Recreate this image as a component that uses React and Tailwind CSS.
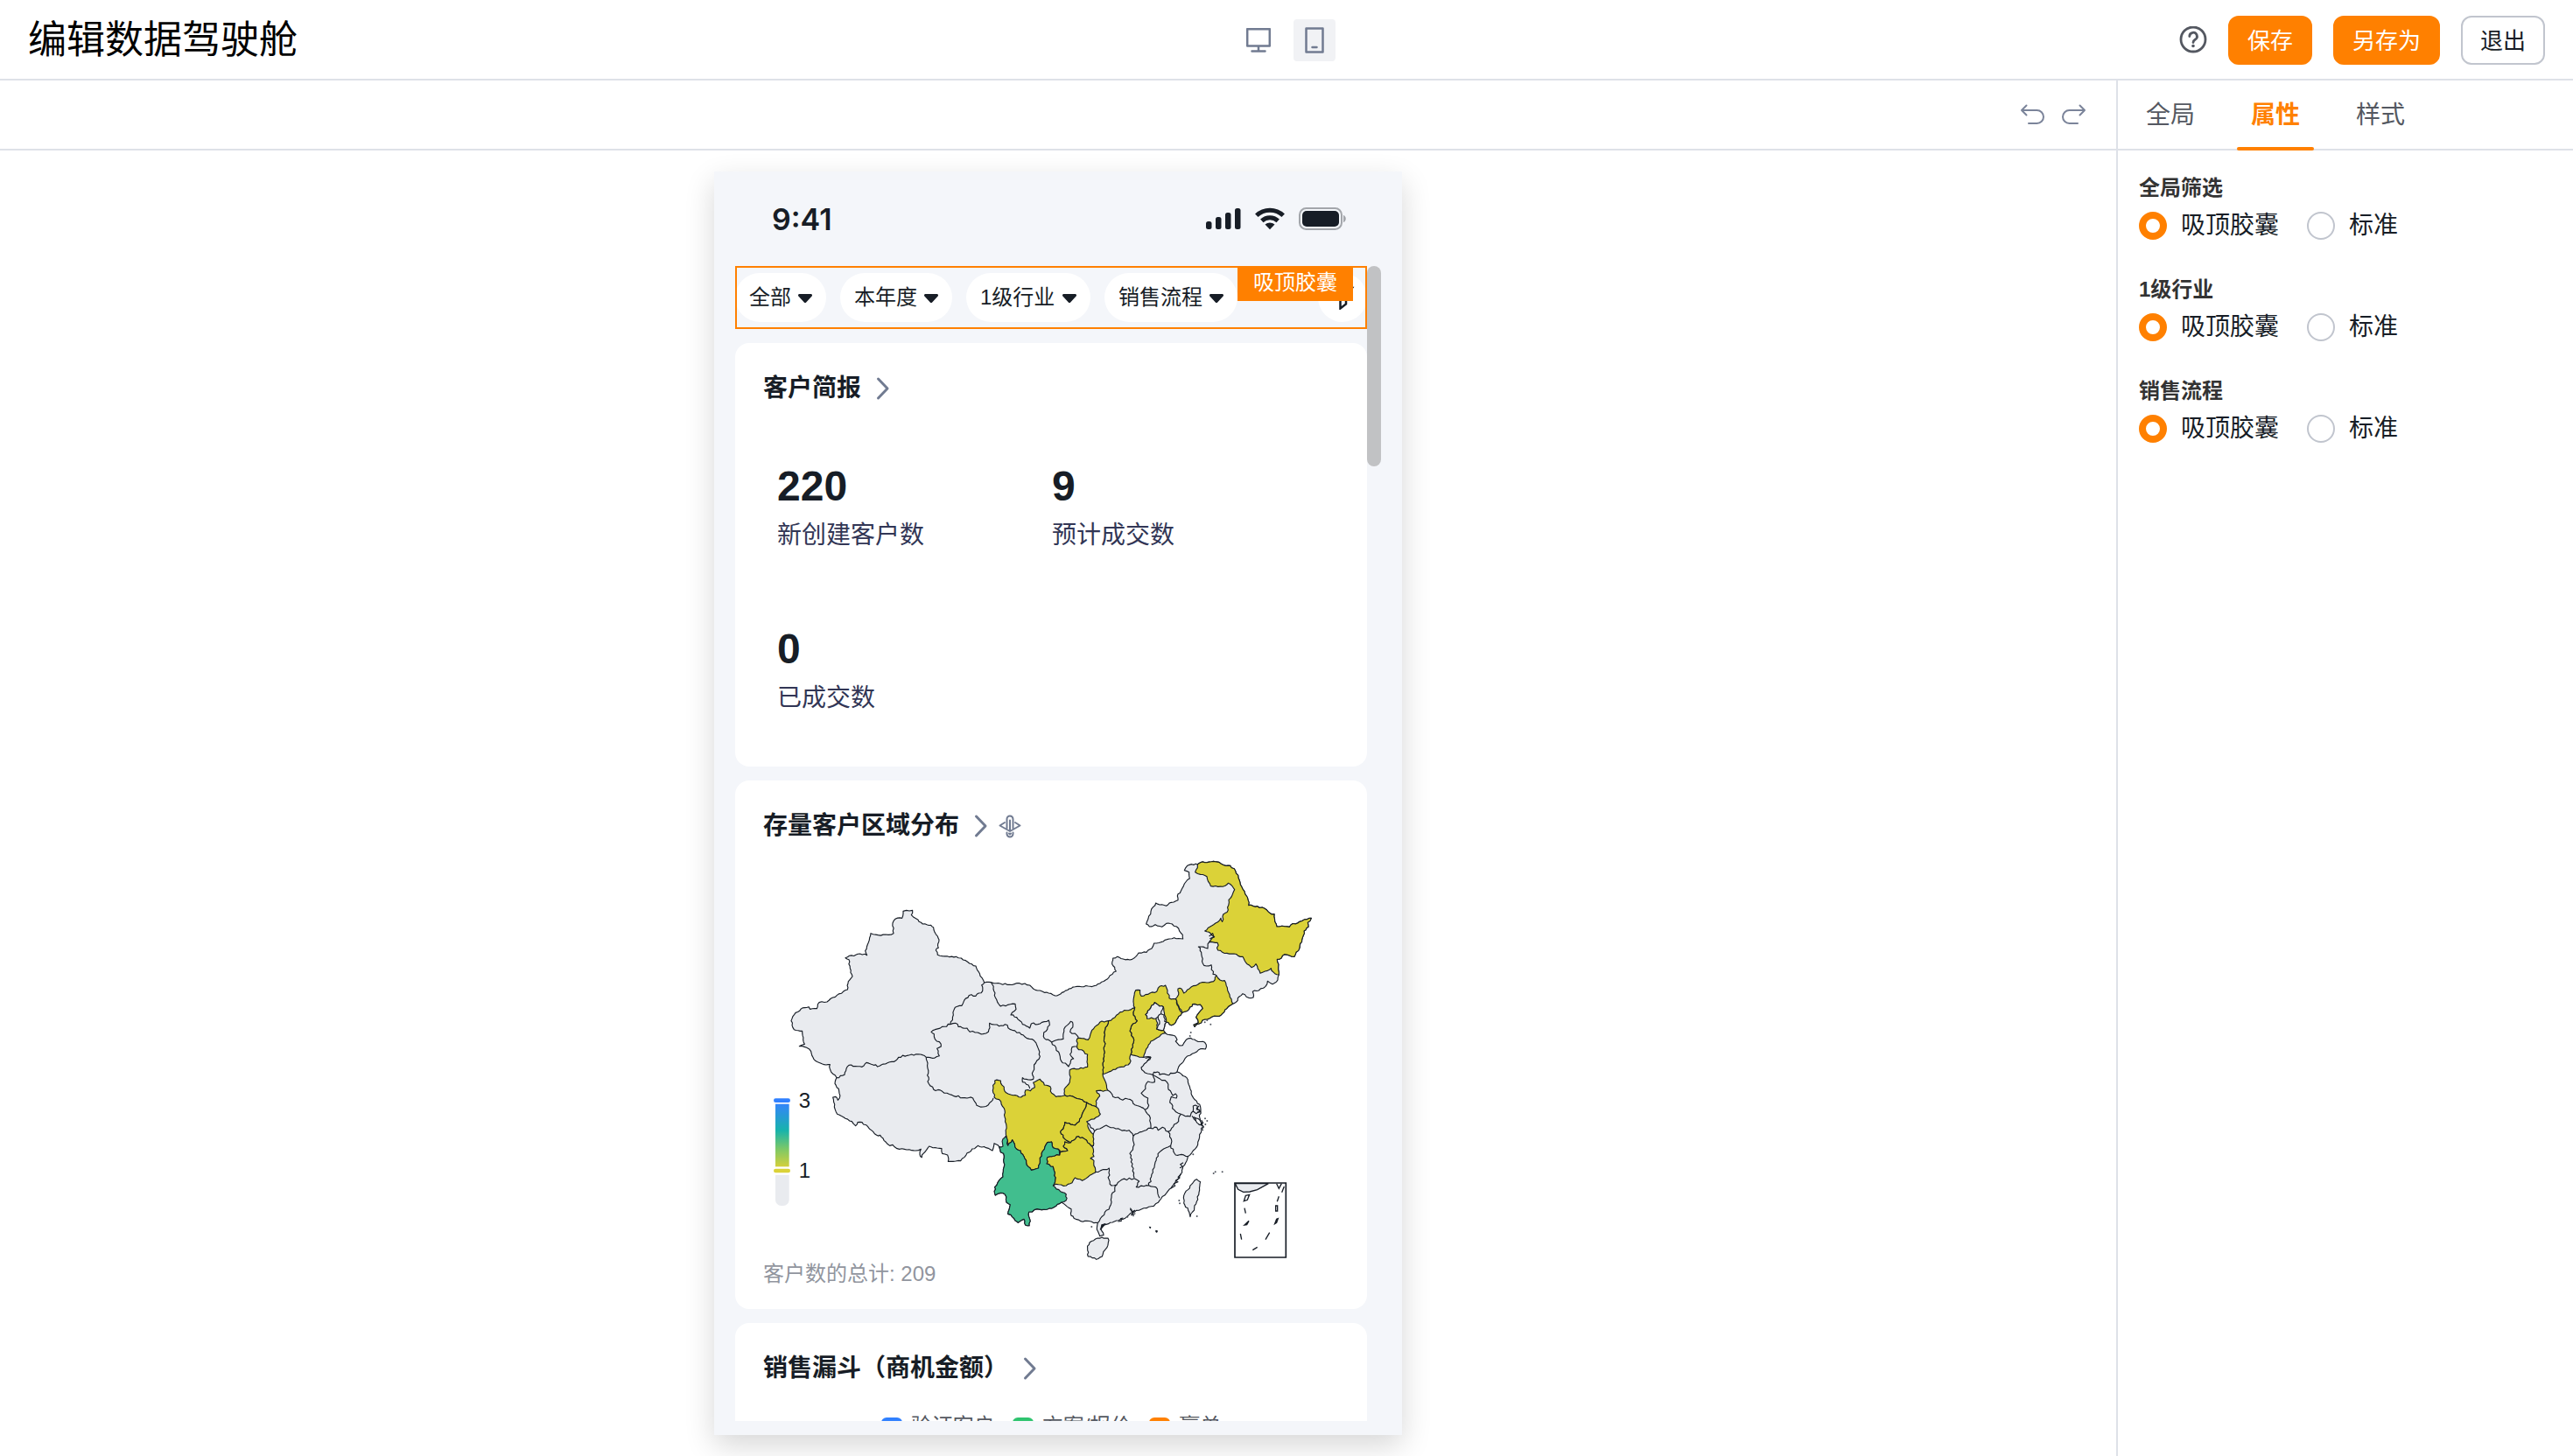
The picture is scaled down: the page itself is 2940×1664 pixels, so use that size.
import React, { useState } from 'react';

const FONT = "font-['Liberation_Sans','Noto_Sans_CJK_SC',sans-serif]";

const FILTERS = ['全部', '本年度', '1级行业', '销售流程'];

const METRICS = [
  { value: 220, label: '新创建客户数' },
  { value: 9, label: '预计成交数' },
  { value: 0, label: '已成交数' },
];

const FUNNEL_LEGEND = [
  { label: '验证客户', color: 'bg-[#3080ff]' },
  { label: '方案/报价', color: 'bg-[#2fc46f]' },
  { label: '赢单', color: 'bg-[#ff8000]' },
];

const TABS = ['全局', '属性', '样式'];
const FIELDS = ['全局筛选', '1级行业', '销售流程'];
const DISPLAY_MODES = ['吸顶胶囊', '标准'];

/* ---------- map geometry ---------- */

const pts = (str, dx = 0, dy = 0) =>
  str.trim().split(/\s+/).map((p) => {
    const [x, y] = p.split(',').map(Number);
    return [x + dx, y + dy];
  });
const east = (str) => pts(str, 1110, 0);
const south = (str) => pts(str, 600, 420);

// Splits every segment into short steps with a small repeatable wobble
const toPath = (points, closed, amount = 4) => {
  const list = closed ? [...points, points[0]] : points;
  let d = `M${list[0][0]} ${list[0][1]}`;
  for (let i = 1; i < list.length; i++) {
    let [ax, ay] = list[i - 1];
    let [bx, by] = list[i];
    const flip = ax > bx || (ax === bx && ay > by);
    const len = Math.hypot(bx - ax, by - ay);
    const steps = Math.max(1, Math.round(len / 8));
    for (let s = 1; s < steps; s++) {
      const k = flip ? steps - s : s;
      const seed = Math.sin((ax + bx) * 12.9898 + (ay + by) * 78.233 + k * 37.719) * 43758.5453;
      const off = (seed - Math.floor(seed) - 0.5) * amount * (flip ? -1 : 1);
      const x = ax + ((bx - ax) * s) / steps - ((by - ay) / len) * off;
      const y = ay + ((by - ay) * s) / steps + ((bx - ax) / len) * off;
      d += `L${x.toFixed(1)} ${y.toFixed(1)}`;
    }
    d += `L${bx} ${by}`;
  }
  return closed ? `${d}Z` : d;
};

const COAST = [
  ...pts(`516,244 527,241 537,243 548,241 544,257 552,265 561,270 570,280 583,288 597,290 611,292 620,300
    624,316 634,330 639,342 635,356 637,370 628,378 634,394 650,398 675,401 697,400 715,405 730,413 743,423
    757,431 765,432 770,446 780,466 794,489 818,488 850,493 880,496 915,491 950,498 962,510 985,516 1000,523
    1022,526 1043,534 1060,523 1085,510 1112,502 1150,501`),
  ...east(`60,500 80,492 100,480 115,464 136,450 122,425 125,405 140,400 160,408 183,411 203,400 213,387 240,385
    258,372 266,354 290,350 310,341 335,335 365,339 364,325 350,303 328,288 308,286 293,298 270,290 250,297
    239,288 246,270 255,245 272,216 285,222 308,226 325,214 348,206 346,192 358,175 370,150 388,132 386,110
    370,104 380,88 395,83 415,84 425,77 470,73 488,76 505,86 527,88 545,106 555,130 566,160 578,185 588,205
    590,224 620,227 645,235 662,250 678,254 680,280 687,297 730,298 735,291 765,280 790,272 805,268 793,283
    795,298 780,312 775,335 765,370 753,385 747,400 730,396 713,392 703,404 688,409 692,435 694,462 690,480
    672,494 655,484 648,502 625,516 604,520 606,540 590,541 570,527 558,537 548,555 536,562 515,578 490,604
    465,606 440,615 420,630 405,640 402,634 418,626 410,608 420,592 433,578 424,564 398,563 386,580 362,592
    350,605 340,625 325,635 308,624 302,640 298,652 305,662 320,668 338,672 345,685 340,690 352,704 364,704
    376,685 392,679 410,688 440,694 445,702 442,717 425,716 405,730 390,738 373,748 362,765 350,778 345,795
    360,803 378,815 388,845 397,878 412,895 425,915 426,930 422,950 434,985 422,1010 416,1045 400,1065 382,1085
    378,1100 365,1120 362,1140 352,1160 338,1175 318,1198 290,1230 280,1243 265,1255 240,1262 205,1270 185,1280
    160,1300 130,1308 95,1320 84,1335 93,1355 80,1358 70,1335 73,1313`),
  ...south(`570,893 545,886 525,887 508,880 492,868 492,845 470,830 458,822 440,835 425,843 410,846 390,848
    375,845 358,855 347,855 350,880 348,902 335,900 330,880 310,892 300,885 285,865 275,862 283,830 270,822
    265,795 250,790 232,798 230,770 240,755 258,735 262,700 260,655 250,650 245,632`),
  ...pts(`828,1040 822,1065 800,1055 772,1048 735,1073 713,1100 670,1102 668,1080 650,1075 648,1058 625,1055
    605,1050 585,1075 580,1088 573,1078 577,1060 560,1065 545,1064 520,1060 495,1058 480,1045 470,1048
    450,1030 437,1012 425,1012 400,990 375,968 360,968 353,980 340,965 318,955 290,940 280,915 275,882
    285,880 292,892 298,885 296,860 282,835 288,815 275,802 265,785 265,770 245,770 210,752 200,725 185,712
    160,707 178,700 170,655 142,650 132,620 143,598 165,580 192,572 197,580 220,578 228,557 255,555 275,540
    325,513 328,485 342,468 334,440 330,410 318,404 325,401 368,390 392,395 386,380 405,320 430,326 465,325
    483,320 480,285 490,270 512,268`),
];

const BORDERS = [
  // Xinjiang, Gansu, Qinghai, Tibet
  pts('794,489 785,497 788,518 775,525 765,535 750,530 725,550 717,568 694,574 688,600 678,632'),
  pts('678,632 650,640 625,650 612,658 622,665 625,683 640,692 646,708 632,715 640,740 615,748 595,745'),
  pts('595,745 575,735 545,735 500,745 485,760 455,768 435,775 415,772 390,763 375,778 330,772 315,805 288,815'),
  pts(`678,632 695,628 705,640 735,645 745,658 770,660 790,665 808,658 812,628 845,638 865,632 890,652 915,660
    940,680 965,688 975,705 985,742 970,765 958,800 962,820 945,822 925,815 925,830 945,840 950,852`),
  pts('595,745 600,765 602,800 600,828 620,855 650,862 690,878 735,885 755,885 768,910 790,915 808,908 825,885'),
  // Inner Mongolia and Ningxia
  pts(`818,488 825,510 832,540 850,570 875,565 900,562 903,580 885,600 905,608 925,632 950,645 955,630 985,630
    1015,618 1018,635 998,660 1000,680 1025,693 1040,712 1052,735 1058,758 1083,777 1090,758 1100,750
    1088,735 1095,710 1112,708`),
  pts('1025,693 1065,682 1072,640 1090,622 1098,632 1088,658 1112,670 1115,682'),
  east('455,350 450,372 418,366 428,385 430,400 437,430 462,428 468,460 480,465'),
  // Henan, Hubei, Shandong
  east('107,858 125,880 150,888 185,890 200,908 235,925'),
  east('230,745 255,745 240,762 222,780 235,798 262,805'),
  east('262,805 268,830 245,828 230,860 222,868 245,885 248,910 235,925'),
  east('262,805 265,796 278,795 285,805 310,805 330,800 345,795'),
  // Anhui, Jiangsu, Shanghai, Zhejiang
  east('262,805 285,818 310,830 315,855 330,876 340,870 343,885 325,880 320,900 335,925 358,940 390,948 400,930 410,938 426,932'),
  east('400,930 400,912 414,912 412,924 424,926'),
  east('396,946 404,958 422,978'),
  east('358,940 350,965 335,975 315,1000 325,1025 323,1048 340,1080 360,1078 382,1085'),
  east('235,925 250,945 255,988 275,985 280,995 295,985 315,1000'),
  // Hunan, Jiangxi, Fujian
  east('323,1048 285,1070 270,1105 262,1140 248,1185'),
  east('40,970 62,998 80,990 102,978 135,990 165,995 180,995 195,1015 225,1000 255,988'),
  east('195,1015 198,1045 183,1075 192,1110 198,1158'),
  east('62,998 56,1020 58,1050'),
  // Guangdong and Guangxi
  east('65,1138 90,1130 112,1125 112,1165 120,1185 138,1182 155,1165 198,1160 215,1170 205,1190 248,1185 272,1190 285,1228'),
  east('138,1182 120,1225 118,1250 95,1285 73,1313'),
  east('184,1262 190,1275 200,1270 192,1282'),
];

const YELLOW = '#dbd238';
const GREEN = '#41be8e';
const WHITE = '#ffffff';
const GREY = '#e9ebef';

const PROVINCES = [
  {
    name: '黑龙江',
    fill: YELLOW,
    points: east(`415,84 425,77 470,73 488,76 505,86 527,88 545,106 555,130 566,160 578,185 588,205 590,224
      620,227 645,235 662,250 678,254 680,280 687,297 730,298 735,291 765,280 790,272 805,268 793,283 795,298
      780,312 775,335 765,370 753,385 747,400 730,396 713,392 703,404 688,409 692,435 694,462 680,458 667,440
      655,448 630,457 615,425 600,437 585,425 570,400 540,390 500,385 485,378 483,352 455,350 473,332 460,320
      440,312 470,290 495,268 500,280 503,255 520,240 522,205 542,170 520,148 510,157 460,158 447,125 425,118
      407,110 415,95`),
  },
  {
    name: '辽宁',
    fill: YELLOW,
    points: east(`340,545 350,530 348,510 360,510 368,525 400,500 430,488 470,485 480,465 492,480 508,482 518,515
      525,530 536,562 515,578 490,604 465,606 440,615 420,630 405,640 402,634 418,626 410,608 420,592 433,578
      424,564 398,563 386,580 362,592 350,568`),
  },
  {
    name: '河北',
    fill: YELLOW,
    points: east(`200,575 195,555 203,515 218,515 222,535 275,520 285,502 305,498 312,515 318,542 340,545 345,565
      362,592 350,605 340,625 325,635 308,624 302,600 298,572 285,570 268,557 255,575 237,598 242,612 272,610
      278,628 275,648 298,652 305,662 255,690 235,730 230,745 186,735 197,685 183,655 188,638 208,620 195,600`),
  },
  { name: '北京', fill: GREY, points: east('268,557 285,570 298,572 290,598 272,612 242,612 237,598 255,575') },
  { name: '天津', fill: GREY, points: east('290,596 300,600 302,622 308,624 302,640 298,652 275,648 285,630 280,604') },
  {
    name: '山西',
    fill: YELLOW,
    points: east(`110,620 132,608 150,590 200,575 195,600 208,620 188,638 183,655 197,685 186,735 183,765 155,778
      90,803 92,750 97,705 95,660`),
  },
  {
    name: '陕西',
    fill: YELLOW,
    points: pts(`1112,682 1127,680 1150,685 1160,660 1190,625 1220,620 1205,660 1207,705 1202,750 1200,803
      1217,858 1178,860 1190,878 1177,895 1178,915 1145,900 1120,888 1070,875 1068,855 1087,830 1087,788
      1148,778 1148,735 1112,712`),
  },
  {
    name: '四川',
    fill: YELLOW,
    points: south(`230,405 250,405 262,435 270,447 300,455 320,462 335,455 335,438 352,440 367,428 362,412
      385,400 400,420 420,425 425,448 440,460 470,455 520,468 545,480 540,500 520,545 505,558 470,548 465,570
      455,580 470,605 490,618 470,615 465,630 480,645 455,650 448,640 430,635 425,615 410,617 400,640 385,670
      380,705 355,712 345,700 330,665 318,645 305,640 290,608 275,628 268,590 270,560 262,500 245,470 228,462
      225,430`),
  },
  {
    name: '重庆',
    fill: YELLOW,
    points: south(`545,480 578,495 592,520 570,537 545,545 555,575 568,590 568,628 560,628 545,610 530,600 510,598
      490,618 470,605 455,580 465,570 470,548 505,558 520,545 540,500`),
  },
  {
    name: '贵州',
    fill: YELLOW,
    points: south(`410,668 452,660 455,650 480,645 465,630 470,615 490,618 510,598 530,600 545,610 560,628 568,640
      570,665 558,672 570,680 575,720 550,735 530,748 505,738 495,755 475,765 440,760 430,765 437,745 430,700
      408,690`),
  },
  {
    name: '云南',
    fill: GREEN,
    points: south(`245,632 258,630 258,605 268,595 275,628 290,608 305,640 318,645 330,665 345,700 355,712 380,705
      385,670 400,640 410,617 425,615 430,635 448,640 452,660 410,668 408,690 430,700 437,745 430,765 455,785
      475,795 475,815 458,822 440,835 425,843 410,846 390,848 375,845 358,855 347,855 350,880 348,902 335,900
      330,880 310,892 300,885 285,865 275,862 283,830 270,822 265,795 250,790 232,798 230,770 240,755 258,735
      262,700 260,655 250,650`),
  },
  { name: '台湾', fill: GREY, points: east('412,1163 425,1172 422,1200 412,1240 398,1275 390,1292 383,1270 368,1245 372,1210 395,1180') },
  { name: '海南', fill: GREY, points: south('555,960 575,948 597,942 618,945 619,960 608,985 598,1008 578,1018 550,1008 548,980') },
  { name: '上海', fill: WHITE, points: east('402,950 412,954 424,962 428,978 414,970') },
];

const ISLETS = [
  [1362, 1328], [1385, 1341], [1550, 625], [1558, 618], [1570, 632], [1502, 660], [1499, 672], [1580, 1143],
  [1610, 1138], [1586, 1138], [1462, 1236], [1464, 1246], [1523, 1290], [1551, 955], [1558, 963], [1552, 975],
  [1538, 990], [1545, 985], [1510, 1078], [1285, 1292], [1305, 1288], [1162, 1326],
];

function ChinaMap() {
  return (
    <svg viewBox="-60 60 2166 1380" className="mt-4 block w-full" role="img" aria-label="存量客户区域分布">
      <defs>
        <linearGradient id="scale" x1="0" y1="0" x2="0" y2="1">
          <stop offset="0" stopColor="#3485fa" />
          <stop offset="0.42" stopColor="#17b3ac" />
          <stop offset="0.72" stopColor="#7dc866" />
          <stop offset="1" stopColor="#d3d03c" />
        </linearGradient>
      </defs>

      <g stroke="#171d26" strokeWidth="3.4" strokeLinejoin="round">
        <path d={toPath(COAST, true, 5)} fill={GREY} />
        {BORDERS.map((line, i) => (
          <path key={i} d={toPath(line, false, 7)} fill="none" />
        ))}
        {PROVINCES.map((p) => (
          <path key={p.name} d={toPath(p.points, true, 6)} fill={p.fill} />
        ))}
        {/* rocky stretches of the south-east coast */}
        <path
          d="M1538 960l6 10-8 4 10 8-8 6 6 8M1530 912l-8 8 12 10-10 4M1476 1106l-10 6 8 8-10 4M1468 1146l-10 10 6 2-14 10 8 4-14 6 4 8-14 8M1294 1266l10 12-6 8 14-6M1270 1296l-8 2 2 8-12 2M1565 330l12-10 4 12-14 6M1346 748l18-4-12 14"
          fill="none"
        />
        <path d="M1195 1320l14-4-18 20" fill="#171d26" />
      </g>

      <g fill="#50555e">
        {ISLETS.map(([x, y]) => (
          <circle key={`${x}-${y}`} cx={x} cy={y} r="3" />
        ))}
        <path d="M1358 1325l8 2-2 6zM1381 1337l8 3-3 7-5-3z" fill="#171d26" />
      </g>

      {/* South China Sea inset */}
      <g fill="none" stroke="#171d26" strokeWidth="4">
        <path d="M1654 1178l10 20 18 9 22-1 26-7 38-21z" fill={GREY} />
        <path d="M1796 1178l8 17 9-17M1822 1188l-8 20M1804 1222l-6 18M1793 1254h6v18h-6zM1796 1300l-6 16 6-4 5-14zM1690 1219l13-3-7 18-12 4zM1686 1262l4 18M1701 1306l-15 14 8-1zM1672 1350l4 20M1772 1346l-14 24M1714 1406l16-10" />
        <path d="M1653 1176V1431H1828V1176Z" strokeWidth="5" />
      </g>

      {/* visual scale */}
      <rect x="72" y="886" width="57" height="14" rx="7" fill="#3080ff" />
      <rect x="78" y="905" width="47" height="215" fill="url(#scale)" />
      <rect x="72" y="1127" width="57" height="14" rx="7" fill={YELLOW} />
      <path d="M78 1148h47v86a20 20 0 0 1-20 20h-7a20 20 0 0 1-20-20z" fill={GREY} />
      <g fill="#171d26" fontSize="72" className={FONT}>
        <text x="158" y="919">3</text>
        <text x="158" y="1159">1</text>
      </g>
    </svg>
  );
}

/* ---------- icons ---------- */

function ChevronIcon() {
  return (
    <svg viewBox="0 0 32 32" className="size-8" fill="none" stroke="#717b91" strokeWidth="3" strokeLinecap="round" strokeLinejoin="round">
      <path d="M11.500 5 L22 16 11.500 27" />
    </svg>
  );
}

function DrillIcon() {
  return (
    <svg viewBox="0 0 28 28" className="size-7" fill="none" stroke="#717b91" strokeWidth="2" strokeLinecap="round" strokeLinejoin="round">
      <path d="M8 10 2.500 13.500 14 20 25.500 13.500 20 10" />
      <path d="M10.500 16.500V6a3.500 3.500 0 0 1 7 0v10.500M14 7.500v11" />
      <path d="M10.500 21.500v1.500a3.500 3.500 0 0 0 7 0v-1.500M13 22.500l1 1 1-1" />
    </svg>
  );
}

function StatusIcons() {
  return (
    <div className="flex items-center gap-4 text-[#171d26]">
      <svg viewBox="0 0 40 26" className="h-[26px] w-10" fill="currentColor">
        <rect x="0" y="16" width="6.500" height="9" rx="2.500" />
        <rect x="11" y="11" width="6.500" height="14" rx="2.500" />
        <rect x="22" y="6" width="6.500" height="19" rx="2.500" />
        <rect x="33" y="1" width="6.500" height="24" rx="2.500" />
      </svg>
      <svg viewBox="0 0 34 26" className="h-[26px] w-[34px]" fill="none" stroke="currentColor" strokeWidth="5">
        <path d="M1.800 9.300a22 22 0 0 1 30.400 0" />
        <path d="M7.800 15.300a13.500 13.500 0 0 1 18.400 0" />
        <path d="M17 25.200l-5.500-5.600a8 8 0 0 1 11 0z" fill="currentColor" stroke="none" />
      </svg>
      <svg viewBox="0 0 54 26" className="h-[26px] w-[54px]">
        <rect x="1" y="1" width="48" height="24" rx="7.500" fill="none" stroke="#a3a6ab" strokeWidth="2" />
        <rect x="4" y="4" width="42" height="18" rx="5" fill="currentColor" />
        <path d="M51 8.800v8.400c1.700-.7 2.800-2.300 2.800-4.200s-1.100-3.500-2.800-4.200z" fill="#a3a6ab" />
      </svg>
    </div>
  );
}

/* ---------- page ---------- */

function Card({ title, extra, className = '', children }) {
  return (
    <section className={`rounded-2xl bg-white pt-8 ${className}`}>
      <div className="flex h-10 items-center px-8">
        <h2 className="mr-2 text-[28px] leading-10 font-bold text-[#171d26]">{title}</h2>
        <button type="button" aria-label={`查看${title}`}>
          <ChevronIcon />
        </button>
        {extra}
      </div>
      {children}
    </section>
  );
}

function Header() {
  return (
    <header className="grid h-[92px] shrink-0 grid-cols-3 items-center border-b-2 border-[#dee1e8] px-8">
      <h1 className="pt-0.5 text-[44px] leading-[56px] text-black">编辑数据驾驶舱</h1>

      <div className="flex justify-center gap-4 pt-0.5 text-[#717b91]">
        <button type="button" aria-label="电脑端" className="flex size-12 items-center justify-center rounded">
          <svg viewBox="0 0 28 28" className="size-7" fill="none" stroke="currentColor" strokeWidth="2.500" strokeLinecap="round" strokeLinejoin="round">
            <path d="M1.200 1.200h25.600v19.300H1.200zM14 20.500v6M6.500 26.600h15" />
          </svg>
        </button>
        <button type="button" aria-label="移动端" className="flex size-12 items-center justify-center rounded bg-[#f1f2f5]">
          <svg viewBox="0 0 22 30" className="h-[30px] w-[22px]" fill="none" stroke="currentColor" strokeWidth="2.500" strokeLinecap="round" strokeLinejoin="round">
            <path d="M1.500 1.500h19v27h-19zM8.500 23h5" />
          </svg>
        </button>
      </div>

      <div className="flex items-center justify-end gap-6 pt-0.5 text-[26px] leading-[50px]">
        <button type="button" aria-label="帮助">
          <svg viewBox="0 0 32 32" className="size-8" fill="none" stroke="#545861" strokeWidth="2.800" strokeLinecap="round">
            <circle cx="16" cy="15" r="14" />
            <path d="M11.800 11.600a4.300 4.300 0 1 1 6.400 3.700c-1.500.9-2.200 1.600-2.200 3.200" />
            <circle cx="16" cy="22.500" r="1.800" fill="#545861" stroke="none" />
          </svg>
        </button>
        <button type="button" className="rounded-xl border-2 border-[#ff8000] bg-[#ff8000] px-5 pt-0.5 text-white">保存</button>
        <button type="button" className="rounded-xl border-2 border-[#ff8000] bg-[#ff8000] px-5 pt-0.5 text-white">另存为</button>
        <button type="button" className="rounded-xl border-2 border-[#c1c5ce] bg-white px-5 pt-0.5 text-[#171d26]">退出</button>
      </div>
    </header>
  );
}

function FilterBar() {
  return (
    <div className="relative flex h-[72px] shrink-0 items-center gap-4">
      {FILTERS.map((name) => (
        <div key={name} className="relative">
          <select
            aria-label={name}
            className="block h-14 appearance-none rounded-full bg-white pr-10 pl-4 text-2xl text-[#171d26]"
          >
            <option>{name}</option>
          </select>
          <svg viewBox="0 0 16 10" className="pointer-events-none absolute top-6 right-4 h-[10px] w-4" fill="#171d26">
            <path d="M1.500 0h13c1.300 0 2 1.600 1.100 2.500L9.200 9.400c-.7.7-1.700.7-2.400 0L.4 2.500C-.5 1.600.2 0 1.500 0z" />
          </svg>
        </div>
      ))}
      <button type="button" aria-label="筛选" className="ml-auto flex size-14 items-center justify-center rounded-full bg-white">
        <svg viewBox="0 0 28 28" className="size-7" fill="none" stroke="#171d26" strokeWidth="2.500">
          <path d="M3 3h22l-7 10v8.500l-6.500 5V13z" />
        </svg>
      </button>
      <div className="pointer-events-none absolute inset-0 border-2 border-[#ff8000]" />
      <span className="absolute top-0 right-4 bg-[#ff8000] px-[18px] pb-0.5 text-2xl leading-[38px] text-white">吸顶胶囊</span>
    </div>
  );
}

function PhonePreview() {
  return (
    <div className="flex w-[786px] flex-col bg-[#f4f6fa] pb-4 pl-6 shadow-[0_12px_32px_rgba(0,0,0,0.16)]">
      <div className="flex h-[108px] shrink-0 items-center justify-between pr-16 pl-[42px]">
        <span className="font-[Inter,sans-serif] text-[34px] font-semibold text-[#171d26]">9:41</span>
        <StatusIcons />
      </div>

      <div className="flex min-h-0 flex-1 pr-6">
        <div className="flex min-w-0 flex-1 flex-col gap-4 overflow-hidden">
          <FilterBar />

          <Card title="客户简报" className="shrink-0 pb-[58px]">
            <dl className="mt-16 grid grid-cols-2 gap-y-[82px] pr-[46px] pl-12">
              {METRICS.map((m) => (
                <div key={m.label} className="flex flex-col-reverse gap-2">
                  <dt className="text-[28px] leading-10 text-[#323655]">{m.label}</dt>
                  <dd className="text-5xl leading-[56px] font-bold text-[#171d26]">{m.value}</dd>
                </div>
              ))}
            </dl>
          </Card>

          <Card
            title="存量客户区域分布"
            className="shrink-0 pb-6"
            extra={
              <button type="button" aria-label="下钻" className="ml-1">
                <DrillIcon />
              </button>
            }
          >
            <ChinaMap />
            <p className="px-8 text-2xl leading-8 text-[#91959e]">客户数的总计: 209</p>
          </Card>

          <Card title="销售漏斗（商机金额）" className="shrink-0 pb-8">
            <ul className="mt-[30px] flex justify-center gap-5 text-2xl leading-8 text-[#545861]">
              {FUNNEL_LEGEND.map((item) => (
                <li key={item.label} className="flex items-center gap-[10px]">
                  <span className={`h-5 w-6 rounded-md ${item.color}`} />
                  {item.label}
                </li>
              ))}
            </ul>
          </Card>
        </div>
        <div className="h-[229px] w-4 shrink-0 rounded-full bg-[#c1c2c4]" />
      </div>
    </div>
  );
}

function PropertyPanel() {
  const [tab, setTab] = useState('属性');
  const [modes, setModes] = useState({});

  return (
    <aside className="w-[522px] shrink-0 border-l-2 border-[#dee1e8]">
      <nav className="flex h-20 gap-8 border-b-2 border-[#dee1e8] px-4 text-[28px]">
        {TABS.map((name) => (
          <button
            key={name}
            type="button"
            onClick={() => setTab(name)}
            className={`relative px-4 pt-0.5 ${tab === name ? 'font-bold text-[#ff8000]' : 'text-[#545861]'}`}
          >
            {name}
            {tab === name && <span className="absolute inset-x-0 -bottom-0.5 h-1 rounded-sm bg-[#ff8000]" />}
          </button>
        ))}
      </nav>

      <form className="flex flex-col gap-[38px] px-6 pt-7">
        {FIELDS.map((field) => (
          <fieldset key={field}>
            <legend className="mb-2 text-2xl leading-[30px] font-bold text-[#333333]">{field}</legend>
            <div className="flex h-10 items-center gap-8">
              {DISPLAY_MODES.map((mode) => (
                <label key={mode} className="flex items-center gap-4 text-[28px] leading-10 text-[#171d26]">
                  <input
                    type="radio"
                    name={field}
                    checked={(modes[field] || '吸顶胶囊') === mode}
                    onChange={() => setModes({ ...modes, [field]: mode })}
                    className="size-8 appearance-none rounded-full border-2 border-[#c1c5ce] bg-white checked:border-8 checked:border-[#ff8000]"
                  />
                  {mode}
                </label>
              ))}
            </div>
          </fieldset>
        ))}
      </form>
    </aside>
  );
}

export default function App() {
  return (
    <div className={`flex h-screen flex-col overflow-hidden bg-white ${FONT}`}>
      <Header />
      <div className="flex min-h-0 flex-1">
        <main className="flex min-w-0 flex-1 flex-col">
          <div className="flex h-20 shrink-0 items-center justify-end gap-5 border-b-2 border-[#dee1e8] pr-[34px] text-[#7b849a]">
            <button type="button" aria-label="撤销">
              <svg viewBox="0 0 28 28" className="size-7" fill="none" stroke="currentColor" strokeWidth="2" strokeLinecap="round" strokeLinejoin="round">
                <path d="M7.500 3.500 2 9l5.500 5.500M2 9h17.500a7.500 7.500 0 0 1 0 15H10" />
              </svg>
            </button>
            <button type="button" aria-label="重做">
              <svg viewBox="0 0 28 28" className="size-7" fill="none" stroke="currentColor" strokeWidth="2" strokeLinecap="round" strokeLinejoin="round">
                <path d="M20.500 3.500 26 9l-5.500 5.500M26 9H8.500a7.500 7.500 0 0 0 0 15H18" />
              </svg>
            </button>
          </div>
          <div className="flex min-h-0 flex-1 justify-center py-6">
            <PhonePreview />
          </div>
        </main>
        <PropertyPanel />
      </div>
    </div>
  );
}
